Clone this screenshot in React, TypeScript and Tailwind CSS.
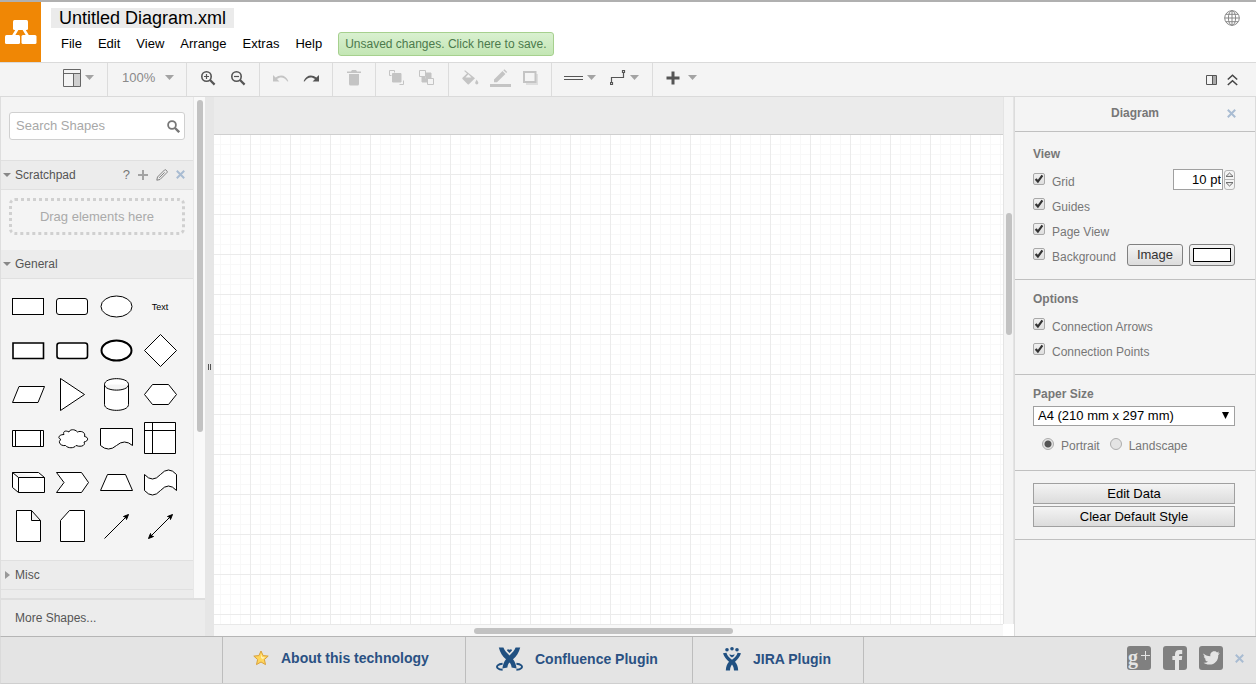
import React, { useState } from 'react';

const menuItems = ['File', 'Edit', 'View', 'Arrange', 'Extras', 'Help'];

const Caret: React.FC = () => (
  <svg width="9" height="5" viewBox="0 0 9 5" className="shrink-0 fill-[#a3a3a3]">
    <path d="M0 0H9L4.5 5Z" />
  </svg>
);

interface ToolGroupProps {
  children: React.ReactNode;
  last?: boolean;
}

const ToolGroup: React.FC<ToolGroupProps> = ({ children, last }) => (
  <div className={`flex items-center px-1.5 pb-1 ${last ? '' : 'border-r border-[#dcdcdc]'}`}>{children}</div>
);

interface ToolButtonProps {
  label: string;
  children: React.ReactNode;
  disabled?: boolean;
  menu?: boolean;
}

const ToolButton: React.FC<ToolButtonProps> = ({ label, children, disabled, menu }) => (
  <button
    type="button"
    aria-label={label}
    disabled={disabled}
    className={`flex h-6 items-center justify-center ${menu ? 'w-11 gap-1' : 'w-[30px]'} ${
      disabled ? 'text-[#c4c4c4]' : 'text-[#555]'
    }`}
  >
    {children}
    {menu && <Caret />}
  </button>
);

const Toolbar: React.FC = () => (
  <div className="flex h-[35px] shrink-0 items-stretch border-y border-[#dadada] bg-[#f4f4f4]">
    <div className="flex items-center border-r border-[#dcdcdc] pr-[13px] pb-1 pl-[63px]">
      <button type="button" aria-label="View panels" className="flex items-center gap-1">
        <svg width="18" height="18" viewBox="0 0 18 18" fill="none" stroke="#666">
          <path d="M11 5H17V17H11Z" fill="#cfcfcf" stroke="none" />
          <path d="M.5 .5H17.5V17.5H.5ZM.5 4.5H17.5M10.5 4.5V17.5" />
        </svg>
        <Caret />
      </button>
    </div>
    <div className="flex items-center border-r border-[#dcdcdc] pr-3 pb-1 pl-3.5">
      <button type="button" className="flex items-center gap-2.5 text-[13px] leading-4 text-[#8a8a8a]">
        100%
        <Caret />
      </button>
    </div>
    <ToolGroup>
      <ToolButton label="Zoom in">
        <svg width="16" height="16" viewBox="0 0 16 16" fill="none" stroke="currentColor">
          <circle cx="6.5" cy="6.5" r="4.7" strokeWidth="1.6" />
          <path d="M10 10L14.6 14.6" strokeWidth="2.2" />
          <path d="M4 6.5H9M6.5 4V9" strokeWidth="1.2" />
        </svg>
      </ToolButton>
      <ToolButton label="Zoom out">
        <svg width="16" height="16" viewBox="0 0 16 16" fill="none" stroke="currentColor">
          <circle cx="6.5" cy="6.5" r="4.7" strokeWidth="1.6" />
          <path d="M10 10L14.6 14.6" strokeWidth="2.2" />
          <path d="M4 6.5H9" strokeWidth="1.2" />
        </svg>
      </ToolButton>
    </ToolGroup>
    <ToolGroup>
      <ToolButton label="Undo" disabled>
        <svg width="16" height="10" viewBox="0 0 16 10" fill="currentColor">
          <path d="M0 2V8.4H6.4L4 6C7 3.6 11.5 3.6 14.4 8.6L15.4 8.2C13 1.8 7 1 2.6 4.6Z" />
        </svg>
      </ToolButton>
      <ToolButton label="Redo">
        <svg width="16" height="10" viewBox="0 0 16 10" fill="currentColor">
          <path d="M16 2V8.4H9.6L12 6C9 3.6 4.5 3.6 1.6 8.6L.6 8.2C3 1.8 9 1 13.4 4.6Z" />
        </svg>
      </ToolButton>
    </ToolGroup>
    <ToolGroup>
      <ToolButton label="Delete" disabled>
        <svg width="14" height="16" viewBox="0 0 14 16" fill="currentColor">
          <path d="M0 1.4H4L5 0H9L10 1.4H14V3H0ZM2 4H12V14A1.6 1.6 0 0 1 10.4 15.6H3.6A1.6 1.6 0 0 1 2 14Z" />
        </svg>
      </ToolButton>
    </ToolGroup>
    <ToolGroup>
      <ToolButton label="To front" disabled>
        <svg width="16" height="16" viewBox="0 0 16 16" fill="none" stroke="currentColor">
          <path d="M2.5 5.5H.5V.5H5.5V2.5M10.5 14.5H14.5V10.5" />
          <path d="M3.5 3.5H12V12H3.5Z" fill="currentColor" />
        </svg>
      </ToolButton>
      <ToolButton label="To back" disabled>
        <svg width="16" height="16" viewBox="0 0 16 16" fill="none" stroke="currentColor">
          <path d="M7 3H12V8H9V7H7ZM3 7H6V9H8V12H3Z" fill="currentColor" />
          <path d="M7 7H9V9H7Z" fill="currentColor" />
          <path d="M.5 .5H6.5V6.5H.5ZM8.5 8.5H14.5V14.5H8.5Z" />
        </svg>
      </ToolButton>
    </ToolGroup>
    <ToolGroup>
      <ToolButton label="Fill color" disabled>
        <svg width="17" height="16" viewBox="0 0 17 16" fill="currentColor">
          <path
            fillRule="evenodd"
            d="M2.2 1L3 .2L13 8.3L6.9 14.2Q6.3 14.7 5.7 14.2L.5 9Q0 8.4 .5 7.8L5 3.4ZM6.4 4.3L3.4 7.4H9.4Z"
          />
          <path d="M14.6 9.4Q16.4 12 16.4 13Q16.2 14.4 14.8 14.4Q13.4 14.4 13.2 13Q13.2 12 14.6 9.4Z" />
        </svg>
      </ToolButton>
      <ToolButton label="Line color" disabled>
        <svg width="21" height="18" viewBox="0 0 21 18" fill="currentColor">
          <path d="M4 10.5L12.5 2L15.4 4.9L7 13.3H4ZM13.3 1.2L14.4 .2L17.2 3L16.2 4.1Z" />
          <path d="M0 15H21V18H0Z" />
        </svg>
      </ToolButton>
      <ToolButton label="Shadow" disabled>
        <svg width="15" height="14" viewBox="0 0 15 14" fill="none">
          <path d="M3 3H15V14H3Z" fill="#dedede" />
          <path d="M1 1H12.5V11H1Z" fill="#f4f4f4" stroke="currentColor" strokeWidth="2" />
        </svg>
      </ToolButton>
    </ToolGroup>
    <ToolGroup>
      <ToolButton label="Connection" menu>
        <svg width="19" height="4" viewBox="0 0 19 4" stroke="currentColor">
          <path d="M0 .5H19M0 3.5H19" />
        </svg>
      </ToolButton>
      <ToolButton label="Waypoints" menu>
        <svg width="16" height="16" viewBox="0 0 16 16" fill="none" stroke="currentColor">
          <path d="M1.5 12V7.5H13.5V3M.5 12.5H2.5V14.5H.5ZM12.5 .5H14.5V2.5H12.5Z" strokeWidth="1.2" />
        </svg>
      </ToolButton>
    </ToolGroup>
    <ToolGroup last>
      <ToolButton label="Insert" menu>
        <svg width="14" height="14" viewBox="0 0 14 14" stroke="currentColor" strokeWidth="3" className="mr-1">
          <path d="M.5 7H13.5M7 .5V13.5" />
        </svg>
      </ToolButton>
    </ToolGroup>
    <div className="ml-auto flex items-center gap-2.5 pr-[18px]">
      <button type="button" aria-label="Format panel">
        <svg width="11" height="10" viewBox="0 0 11 10" fill="none" stroke="#555" className="block">
          <path d="M7 1H10V9H7Z" fill="#aaa" stroke="none" />
          <path d="M.5 .5H10.5V9.5H.5ZM6.5 .5V9.5" />
        </svg>
      </button>
      <button type="button" aria-label="Collapse">
        <svg width="11" height="12" viewBox="0 0 11 12" fill="none" stroke="#444" strokeWidth="1.5" className="block">
          <path d="M.8 5.5L5.5 1.2L10.2 5.5M.8 11L5.5 6.7L10.2 11" />
        </svg>
      </button>
    </div>
  </div>
);

const Header: React.FC = () => (
  <header className="flex h-[62px] shrink-0 items-stretch border-t-2 border-[#b0b0b0] bg-white">
    <div className="flex w-[41px] shrink-0 justify-center bg-[#f08705]">
      <svg width="33" height="60" viewBox="0 0 33 60" fill="#fff">
        <path d="M14 26L8 36M19 26L25 36" stroke="#fff" strokeWidth="2.6" />
        <rect x="9" y="18" width="15" height="10" rx="1.5" />
        <rect x="1" y="33" width="15" height="9" rx="1.5" />
        <rect x="17.5" y="33" width="15" height="9" rx="1.5" />
      </svg>
    </div>
    <div className="flex flex-col items-start pl-2.5">
      <h1 className="mt-1.5 bg-[#ebebeb] px-2 text-lg leading-5 text-black">Untitled Diagram.xml</h1>
      <nav className="mt-1 flex h-6 items-center gap-4 pl-2.5 text-[13px] text-black">
        {menuItems.map((item) => (
          <button key={item} type="button">
            {item}
          </button>
        ))}
        <button
          type="button"
          className="h-6 rounded-[3px] border border-[#a6d08e] bg-linear-to-b from-[#d9f0d0] to-[#c3e6b4] px-1.5 text-xs text-[#4c7a4c]"
        >
          Unsaved changes. Click here to save.
        </button>
      </nav>
    </div>
    <button type="button" aria-label="Language" className="mt-2 mr-4 ml-auto self-start">
      <svg width="16" height="16" viewBox="0 0 16 16" fill="none" stroke="#888" className="block">
        <circle cx="8" cy="8" r="7.3" />
        <ellipse cx="8" cy="8" rx="3.6" ry="7.3" />
        <path d="M8 .7V15.3M.7 8H15.3M2 4.3H14M2 11.7H14" />
      </svg>
    </button>
  </header>
);

interface ShapeItem {
  name: string;
  draw: React.ReactNode;
}

// every shape is drawn in a 44x44 cell
const shapes: ShapeItem[] = [
  { name: 'Rectangle', draw: <rect x="6.5" y="14.5" width="31" height="16" /> },
  { name: 'Rounded rectangle', draw: <rect x="6.5" y="14.5" width="31" height="16" rx="2.5" /> },
  { name: 'Ellipse', draw: <ellipse cx="22.5" cy="22.5" rx="15.5" ry="10.5" /> },
  {
    name: 'Text',
    draw: (
      <text x="22" y="26" textAnchor="middle" fill="#000" stroke="none" className="text-[9px]">
        Text
      </text>
    ),
  },
  { name: 'Bold rectangle', draw: <path d="M7 15H37.5V30.5H7Z" strokeWidth="1.6" /> },
  { name: 'Bold rounded rectangle', draw: <rect x="7" y="15" width="30.5" height="15.5" rx="2.5" strokeWidth="1.6" /> },
  { name: 'Bold ellipse', draw: <ellipse cx="22.5" cy="22.5" rx="15" ry="10" strokeWidth="2" /> },
  { name: 'Rhombus', draw: <path d="M22.5 6.5L38.5 22.5L22.5 38.5L6.5 22.5Z" /> },
  { name: 'Parallelogram', draw: <path d="M13 14.5H38.5L32 30.5H6.5Z" /> },
  { name: 'Triangle', draw: <path d="M10.5 6.5L34.5 22.5L10.5 38.5Z" /> },
  {
    name: 'Cylinder',
    draw: (
      <path d="M10.5 12.5C10.5 4.7 34.5 4.7 34.5 12.5V32.5C34.5 40.3 10.5 40.3 10.5 32.5ZM10.5 12.5C10.5 20 34.5 20 34.5 12.5" />
    ),
  },
  { name: 'Hexagon', draw: <path d="M14.5 12.5H30.5L38.5 22.5L30.5 32.5H14.5L6.5 22.5Z" /> },
  { name: 'Process', draw: <path d="M6.5 14.5H37.5V30.5H6.5ZM9.5 14.5V30.5M34.5 14.5V30.5" /> },
  {
    name: 'Cloud',
    draw: (
      <path d="M14 18.5C9 18.5 7 22 11 23.5C7 26 11 30.5 15.5 29.5C18 32.5 24 32.5 26 29.5C31 31.5 36 29.5 34 26C39 25 38.5 21 34.5 20.5C36 16 30.5 14.5 27.5 16C24.5 12.5 19.5 13.5 19 16C15.5 14 12.5 15.5 14 18.5Z" />
    ),
  },
  { name: 'Document', draw: <path d="M6.5 12.5H38.5V29.5Q30.5 22.5 22.5 29.5Q14.5 36.5 6.5 29.5Z" /> },
  { name: 'Internal storage', draw: <path d="M6.5 6.5H37.5V37.5H6.5ZM6.5 14.5H37.5M14.5 6.5V37.5" /> },
  {
    name: 'Cube',
    draw: <path d="M6.5 12.5H32.5L38.5 17.5V32.5H12.5L6.5 27.5ZM6.5 12.5L12.5 17.5H38.5M12.5 17.5V32.5" />,
  },
  { name: 'Step', draw: <path d="M6.5 12.5H31.5L38.5 22.5L31.5 32.5H6.5L14 22.5Z" /> },
  { name: 'Trapezoid', draw: <path d="M6.5 30.5L13.5 14.5H31.5L38.5 30.5Z" /> },
  {
    name: 'Tape',
    draw: <path d="M6.5 14.5Q14.5 23.5 22.5 14.5Q30.5 5.5 38.5 14.5V30.5Q30.5 21.5 22.5 30.5Q14.5 39.5 6.5 30.5Z" />,
  },
  { name: 'Note', draw: <path d="M10.5 6.5H25.5L34.5 16.5V37.5H10.5ZM25.5 6.5V16.5H34.5" /> },
  { name: 'Card', draw: <path d="M19.5 6.5H34.5V37.5H10.5V16.5Z" /> },
  {
    name: 'Arrow',
    draw: (
      <>
        <path d="M10.5 34.5L33 12" />
        <path d="M34.5 10.5L32.5 15.5L31.8 13.2L29.5 12.5Z" fill="#000" />
      </>
    ),
  },
  {
    name: 'Bidirectional arrow',
    draw: (
      <>
        <path d="M12 33L33 12" />
        <path d="M34.5 10.5L32.5 15.5L31.8 13.2L29.5 12.5Z" fill="#000" />
        <path d="M10.5 34.5L12.5 29.5L13.2 31.8L15.5 32.5Z" fill="#000" />
      </>
    ),
  },
];

const CloseIcon: React.FC = () => (
  <svg width="9" height="9" viewBox="0 0 9 9" stroke="#a9bcd2" strokeWidth="2" className="block">
    <path d="M.8 .8L8.2 8.2M8.2 .8L.8 8.2" />
  </svg>
);

const Sidebar: React.FC = () => (
  <aside className="flex w-[205px] shrink-0 flex-col border-l border-[#dedede] bg-[#f4f4f4]">
    <div className="flex min-h-0 flex-1">
      <div className="flex min-w-0 flex-1 flex-col overflow-hidden text-xs text-[#555]">
        <label className="mx-2 mt-[15px] mb-5 flex h-7 shrink-0 items-center rounded-[3px] border border-[#d0d0d0] bg-white pr-1 pl-1.5">
          <input
            type="text"
            aria-label="Search Shapes"
            placeholder="Search Shapes"
            className="min-w-0 flex-1 text-[13px] outline-none placeholder:text-[#a8a8a8]"
          />
          <svg width="13" height="13" viewBox="0 0 13 13" fill="none" stroke="#777" strokeWidth="1.8">
            <circle cx="5" cy="5" r="3.9" />
            <path d="M8 8L12.2 12.2" strokeWidth="2.4" />
          </svg>
        </label>

        <div className="flex h-[30px] shrink-0 items-center gap-1 border-y border-[#e0e0e0] bg-[#ececec] pr-2 pb-px pl-0.5">
          <svg width="8" height="4" viewBox="0 0 8 4" fill="#888">
            <path d="M0 0H8L4 4Z" />
          </svg>
          <span>Scratchpad</span>
          <button type="button" className="ml-auto text-[13px] leading-4 text-[#777]">
            ?
          </button>
          <button type="button" aria-label="Add" className="ml-1">
            <svg width="10" height="10" viewBox="0 0 10 10" stroke="#a3a3a3" strokeWidth="2" className="block">
              <path d="M0 5H10M5 0V10" />
            </svg>
          </button>
          <button type="button" aria-label="Edit" className="mx-1">
            <svg width="12" height="12" viewBox="0 0 12 12" fill="none" stroke="#777" className="block">
              <path d="M.8 11.2L1.5 8L8.6 .9Q9.2 .4 9.9 1L11.1 2.2Q11.6 2.8 11.1 3.4L4 10.5ZM3.2 8.8L8.6 3.4" strokeWidth=".9" />
            </svg>
          </button>
          <button type="button" aria-label="Close scratchpad">
            <CloseIcon />
          </button>
        </div>
        <div className="mx-2 mt-2 mb-[15px] flex h-[37px] shrink-0 items-center justify-center rounded-md border-3 border-dotted border-[#d0d0d0] text-[13px] text-[#aaa]">
          Drag elements here
        </div>

        <div className="flex h-[29px] shrink-0 items-center gap-1 border-b border-[#e0e0e0] bg-[#ececec] pl-0.5">
          <svg width="8" height="4" viewBox="0 0 8 4" fill="#888">
            <path d="M0 0H8L4 4Z" />
          </svg>
          General
        </div>
        <div className="mt-[5px] mb-3 ml-[5px] grid shrink-0 grid-cols-[repeat(4,44px)]">
          {shapes.map((shape) => (
            <button key={shape.name} type="button" aria-label={shape.name}>
              <svg width="44" height="44" viewBox="0 0 44 44" fill="#fff" stroke="#000" className="block">
                {shape.draw}
              </svg>
            </button>
          ))}
        </div>

        <div className="flex h-[30px] shrink-0 items-center gap-1 border-y border-[#e0e0e0] bg-[#ececec] pl-1">
          <svg width="5" height="8" viewBox="0 0 5 8" fill="#999" className="mr-px">
            <path d="M0 0V8L5 4Z" />
          </svg>
          Misc
        </div>
        <div className="flex-1 bg-[#ececec]" />
      </div>
      <div className="flex w-3 shrink-0 justify-center border-l border-[#e8e8e8] bg-[#f9f9f9] pt-[3px]">
        <div className="h-2/3 w-1.5 rounded-full bg-[#c2c2c2]" />
      </div>
    </div>
    <a
      href="#shapes"
      className="flex h-[38px] shrink-0 items-center border-t-2 border-[#dedede] bg-[#ececec] pb-px pl-3.5 text-xs text-[#555]"
    >
      More Shapes...
    </a>
  </aside>
);

const Canvas: React.FC = () => (
  <main className="flex min-w-0 flex-1">
    <div className="flex min-w-0 flex-1 flex-col">
      <div className="h-[37px] shrink-0 bg-[#ebebeb]" />
      <div className="flex-1 border-t border-[#cfcfcf] bg-white bg-[linear-gradient(to_right,#ebebeb_1px,transparent_1px),linear-gradient(to_bottom,#ebebeb_1px,transparent_1px),linear-gradient(to_right,#f8f8f8_1px,transparent_1px),linear-gradient(to_bottom,#f8f8f8_1px,transparent_1px)] bg-[length:40px_40px,40px_40px,10px_10px,10px_10px] bg-[position:36px_-1px]" />
      <div className="flex h-3 shrink-0 items-center justify-center border-t border-[#e8e8e8] bg-[#f8f8f8] pr-2.5">
        <div className="h-1.5 w-1/3 rounded-full bg-[#c2c2c2]" />
      </div>
    </div>
    <div className="flex w-[11px] shrink-0 flex-col bg-white">
      <div className="flex flex-1 justify-center border-x border-[#e4e4e4] bg-[#f4f4f4] pt-[116px]">
        <div className="h-[122px] w-1.5 rounded-full bg-[#c2c2c2]" />
      </div>
      <div className="h-3 shrink-0" />
    </div>
  </main>
);

interface CheckRowProps {
  label: string;
  checked: boolean;
  onChange: () => void;
  children?: React.ReactNode;
}

const CheckRow: React.FC<CheckRowProps> = ({ label, checked, onChange, children }) => (
  <div className="flex h-[25px] items-center justify-between">
    <label className="flex items-center gap-[7px] pt-1">
      <span className="relative -mt-1.5 block size-3">
        <input
          type="checkbox"
          checked={checked}
          onChange={onChange}
          className="block size-3 appearance-none rounded-[2px] border border-[#a8a8a8] bg-linear-to-b from-[#f0f0f0] to-[#dedede]"
        />
        {checked && (
          <svg width="12" height="12" viewBox="0 0 12 12" fill="none" stroke="#333" strokeWidth="2.2" className="pointer-events-none absolute inset-0">
            <path d="M2.6 6L4.9 8.6L9.4 2.4" />
          </svg>
        )}
      </span>
      {label}
    </label>
    {children}
  </div>
);

const FormatPanel: React.FC = () => {
  const [options, setOptions] = useState<Record<string, boolean>>({
    Grid: true,
    Guides: true,
    'Page View': true,
    Background: true,
    'Connection Arrows': true,
    'Connection Points': true,
  });
  const [orientation, setOrientation] = useState('Portrait');

  const toggle = (name: string) => setOptions((prev) => ({ ...prev, [name]: !prev[name] }));

  return (
    <aside className="w-[242px] shrink-0 border-x border-[#dcdcdc] bg-[#f4f4f4] text-xs text-[#777]">
      <div className="relative flex h-[35px] items-center justify-center border-b border-[#c0c0c0] pb-0.5">
        <h2 className="font-bold">Diagram</h2>
        <button type="button" aria-label="Close panel" className="absolute top-3 right-[19px]">
          <CloseIcon />
        </button>
      </div>

      <section className="border-b border-[#c0c0c0] pt-3.5 pr-5 pb-3 pl-[18px]">
        <h3 className="mb-[5px] leading-4 font-bold">View</h3>
        <CheckRow label="Grid" checked={options.Grid} onChange={() => toggle('Grid')}>
          <div className="flex items-center">
            <input
              type="text"
              aria-label="Grid size"
              defaultValue="10 pt"
              className="h-[21px] w-[50px] border border-[#a0a0a0] bg-white px-px text-right text-[13px] text-black outline-none"
            />
            <div className="ml-px flex h-5 w-[11px] flex-col rounded-[3px] border border-[#b5b5b5]">
              <button type="button" aria-label="Increase" className="flex flex-1 items-center justify-center border-b border-[#b5b5b5]">
                <svg width="9" height="5" viewBox="0 0 9 5" fill="none" stroke="#666">
                  <path d="M1 4.4H8L4.5 1Z" />
                </svg>
              </button>
              <button type="button" aria-label="Decrease" className="flex flex-1 items-center justify-center">
                <svg width="9" height="5" viewBox="0 0 9 5" fill="none" stroke="#666">
                  <path d="M1 .6H8L4.5 4Z" />
                </svg>
              </button>
            </div>
          </div>
        </CheckRow>
        <CheckRow label="Guides" checked={options.Guides} onChange={() => toggle('Guides')} />
        <CheckRow label="Page View" checked={options['Page View']} onChange={() => toggle('Page View')} />
        <CheckRow label="Background" checked={options.Background} onChange={() => toggle('Background')}>
          <div className="flex gap-1.5">
            <button
              type="button"
              className="h-[22px] w-14 rounded-[3px] border border-[#808080] bg-linear-to-b from-[#f4f4f4] to-[#dcdcdc] text-[13px] leading-5 text-[#333]"
            >
              Image
            </button>
            <button
              type="button"
              aria-label="Background color"
              className="flex h-[22px] w-[46px] items-stretch rounded-[3px] border border-[#808080] bg-linear-to-b from-[#f4f4f4] to-[#e4e4e4] p-[3px]"
            >
              <span className="block flex-1 border border-black bg-white" />
            </button>
          </div>
        </CheckRow>
      </section>

      <section className="border-b border-[#c0c0c0] pt-[11px] pr-5 pb-3 pl-[18px]">
        <h3 className="mb-[5px] leading-4 font-bold">Options</h3>
        <CheckRow label="Connection Arrows" checked={options['Connection Arrows']} onChange={() => toggle('Connection Arrows')} />
        <CheckRow label="Connection Points" checked={options['Connection Points']} onChange={() => toggle('Connection Points')} />
      </section>

      <section className="border-b border-[#c0c0c0] pt-[11px] pr-5 pb-4 pl-[18px]">
        <h3 className="mb-1 leading-4 font-bold">Paper Size</h3>
        <div className="relative">
          <select
            aria-label="Paper Size"
            className="block h-5 w-full appearance-none border border-[#a0a0a0] bg-white px-1 text-[13px] leading-4 text-black"
          >
            <option>A4 (210 mm x 297 mm)</option>
            <option>A3 (297 mm x 420 mm)</option>
          </select>
          <svg width="7" height="7" viewBox="0 0 7 7" className="pointer-events-none absolute top-1.5 right-1.5">
            <path d="M0 0H7L3.5 7Z" />
          </svg>
        </div>
        <div className="mt-3 flex gap-2.5 pl-[9px]">
          {['Portrait', 'Landscape'].map((name) => (
            <label key={name} className="flex items-center gap-[7px]">
              <input
                type="radio"
                name="orientation"
                checked={orientation === name}
                onChange={() => setOrientation(name)}
                className="mb-1 size-3 appearance-none rounded-full border border-[#adadad] bg-[#e4e4e4] checked:bg-[radial-gradient(circle,#555_3px,#e4e4e4_4px)]"
              />
              {name}
            </label>
          ))}
        </div>
      </section>

      <section className="flex flex-col gap-0.5 border-b border-[#c0c0c0] pt-3 pr-5 pb-3 pl-[18px]">
        {['Edit Data', 'Clear Default Style'].map((name) => (
          <button
            key={name}
            type="button"
            className="h-[21px] w-full border border-[#a0a0a0] bg-linear-to-b from-[#f4f4f4] to-[#dcdcdc] text-[13px] leading-4 text-black"
          >
            {name}
          </button>
        ))}
      </section>
    </aside>
  );
};

const Footer: React.FC = () => (
  <footer className="flex h-12 shrink-0 items-stretch border-t border-b border-l border-t-[#b5b5b5] border-b-[#cfcfcf] border-l-[#dadada] bg-[#e4e4e4] text-sm font-bold text-[#2a5183]">
    <div className="w-[221px] shrink-0" />
    <a href="#about" className="flex w-[243px] items-center gap-3 border-l border-[#bdbdbd] pb-1 pl-[30px]">
      <svg width="16" height="16" viewBox="0 0 16 16" fill="#ffd65c" stroke="#d9a13b" strokeLinejoin="round">
        <path d="M8 1L10.1 5.6L15.2 6.1L11.4 9.5L12.5 14.6L8 12L3.5 14.6L4.6 9.5L.8 6.1L5.9 5.6Z" />
        <path d="M8 4L9.2 7L12 7.3L9.9 9.2L8 8Z" fill="#fff0b5" stroke="none" />
      </svg>
      About this technology
    </a>
    <a href="#confluence" className="flex w-[227px] items-center gap-3 border-l border-[#bdbdbd] pb-0.5 pl-[30px]">
      <svg width="27" height="24" viewBox="0 0 27 24" fill="none" stroke="#205081">
        <path d="M2.8 .4L7.4 .6C8.6 3.6 10.8 6 13.5 8.4C16.2 6 18.4 3.6 19.6 .6L24.2 .4C23 5.4 20.4 9.4 17 12.2C18.8 14.4 20.2 17.4 20.6 21.4L15.6 20.6C15.4 18.2 14.8 16.8 13.5 15.4C12.2 16.8 11.6 18.2 11.4 20.6L6.4 21.4C6.8 17.4 8.2 14.4 10 12.2C6.6 9.4 4 5.4 2.8 .4Z" fill="#205081" stroke="none" />
        <path d="M13.5 6L11 3.4Q11.4 1.6 13.5 2.8Q15.6 1.6 16 3.4Z" fill="#205081" stroke="none" />
        <path d="M6.6 16.8C2 17 -.2 19.4 1.6 21.2C3 22.6 5 22.8 6.6 22.8M20.4 16.8C25 17 27.2 19.4 25.4 21.2C24 22.6 22 22.8 20.4 22.8" strokeWidth="1.9" />
      </svg>
      Confluence Plugin
    </a>
    <a href="#jira" className="flex w-[171px] items-center gap-3 border-l border-[#bdbdbd] pb-0.5 pl-[30px]">
      <svg width="18" height="24" viewBox="0 0 18 24" fill="#205081">
        <circle cx="4" cy="2.8" r="1.8" />
        <circle cx="9" cy="1.8" r="1.8" />
        <circle cx="14" cy="2.8" r="1.8" />
        <path d="M9 10.6Q6.2 9 6.4 7.2Q9 8.6 11.6 7.2Q11.8 9 9 10.6Z" />
        <path d="M0 6.2L3.4 5.8C4.4 9 6.4 10.6 9 12.8C11.6 10.6 13.6 9 14.6 5.8L18 6.2C17 10 14.4 12.4 12 14.8C14 17.2 15 19.6 15.2 23.6L11 23.6C10.8 20.8 10.2 19 9 17.6C7.8 19 7.2 20.8 7 23.6L2.8 23.6C3 19.6 4 17.2 6 14.8C3.6 12.4 1 10 0 6.2Z" />
      </svg>
      JIRA Plugin
    </a>
    <div className="flex flex-1 items-center justify-end gap-3 border-l border-[#bdbdbd] pr-3 pb-1">
      <a href="#google" aria-label="Google Plus" className="block rounded-[3px] bg-[#808080]">
        <svg width="24" height="24" viewBox="0 0 24 24" className="block">
          <text x="1" y="18" fill="#e4e4e4" className="font-['Liberation_Serif',serif] text-[20px] font-bold">
            g
          </text>
          <path d="M14 9.5H23M18.5 5V14" stroke="#e4e4e4" />
        </svg>
      </a>
      <a href="#facebook" aria-label="Facebook" className="block rounded-[3px] bg-[#808080]">
        <svg width="24" height="24" viewBox="0 0 24 24" fill="#e4e4e4" className="block">
          <path d="M12 24V14H9.4V10H12V8.4Q12 4 16.4 4H19.2V8H17.2Q16 8 16 9.2V10H19.2L18.8 14H16V24Z" />
        </svg>
      </a>
      <a href="#twitter" aria-label="Twitter" className="block rounded-[3px] bg-[#808080]">
        <svg width="24" height="24" viewBox="0 0 24 24" fill="#e4e4e4" className="block">
          <path d="M4.4 7.4C6 9 8.4 10 11.4 10.2C10.8 7.4 12.8 5 15.4 5.2C16.6 5.2 17.4 5.8 18 6.4L20 5.6L19 7.4L20.8 7.2L19.2 9.2C19.6 14.4 15.6 18.8 10.2 18.6C8 18.6 6 17.8 4.6 16.8C6.4 17 8 16.6 9.2 15.6C7.6 15.4 6.4 14.6 6 13.2H7.4C5.8 12.6 5 11.4 4.8 10L6.2 10.4C4.8 9.4 4.2 8.4 4.4 7.4Z" />
        </svg>
      </a>
      <button type="button" aria-label="Close footer">
        <CloseIcon />
      </button>
    </div>
  </footer>
);

const App: React.FC = () => (
  <div className="flex h-screen min-h-[684px] flex-col bg-white font-['Liberation_Sans',Arial,sans-serif]">
    <Header />
    <Toolbar />
    <div className="flex min-h-0 flex-1">
      <Sidebar />
      <div className="flex w-[9px] shrink-0 items-center justify-center gap-px bg-[#e6e6e6]">
        <span className="h-1.5 w-px bg-[#555]" />
        <span className="h-1.5 w-px bg-[#555]" />
      </div>
      <Canvas />
      <FormatPanel />
    </div>
    <Footer />
  </div>
);

export default App;
